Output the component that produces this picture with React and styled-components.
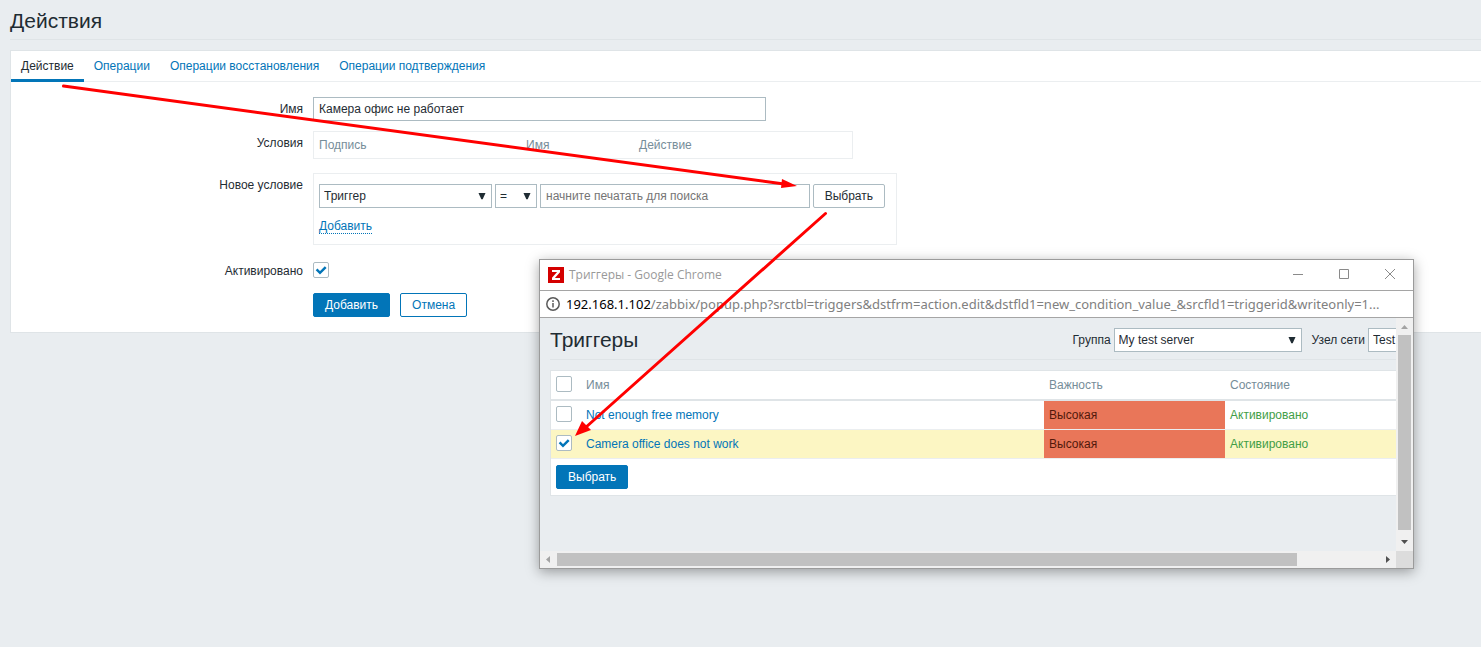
import React, { useState } from "react";
import styled, { createGlobalStyle } from "styled-components";

const COLORS = {
  page: "#e9edf0",
  text: "#1f2c33",
  link: "#0275b8",
  grey: "#768d99",
  line: "#dfe4e7",
  lightLine: "#ebeef0",
  control: "#acbbc2",
  high: "#e97659",
  highText: "#52190b",
  green: "#429e47",
  selected: "#fcf6c3",
  arrow: "#ff0000",
};

const TABS = [
  "Действие",
  "Операции",
  "Операции восстановления",
  "Операции подтверждения",
];

const TRIGGERS = [
  { id: 1, name: "Not enough free memory" },
  { id: 2, name: "Camera office does not work" },
];

const Select = ({ label, id, width, options }) => (
  <StSelectWrap $width={width}>
    <StSelect id={id} aria-label={label}>
      {options.map((option) => (
        <option key={option}>{option}</option>
      ))}
    </StSelect>
    <StCaret viewBox="0 0 8 8" aria-hidden="true">
      <path d="M0.500 1h7L4.700 7.200h-1.400z" fill={COLORS.text} />
    </StCaret>
  </StSelectWrap>
);

const CheckBox = ({ id, label, checked, onChange }) => (
  <StCheck>
    <input
      id={id}
      type="checkbox"
      aria-label={label}
      checked={checked}
      onChange={onChange}
    />
    {checked && (
      <svg viewBox="0 0 16 16" aria-hidden="true">
        <path
          d="M3.600 7.400l3.400 3.400 5.700-5.600"
          fill="none"
          stroke={COLORS.link}
          strokeWidth="2.500"
        />
      </svg>
    )}
  </StCheck>
);

const ActionForm = () => {
  const [name, setName] = useState("Камера офис не работает");
  const [enabled, setEnabled] = useState(true);

  return (
    <StForm onSubmit={(e) => e.preventDefault()}>
      <StLabel htmlFor="name">Имя</StLabel>
      <StNameInput
        id="name"
        value={name}
        onChange={(e) => setName(e.target.value)}
      />

      <StLabel as="span">Условия</StLabel>
      <StConditions>
        <thead>
          <tr>
            <th>Подпись</th>
            <th>Имя</th>
            <th>Действие</th>
          </tr>
        </thead>
      </StConditions>

      <StLabel htmlFor="condition">Новое условие</StLabel>
      <StNewCondition>
        <StControls>
          <Select id="condition" width="173px" options={["Триггер"]} />
          <Select label="Оператор" width="42px" options={["="]} />
          <StSearch
            aria-label="Триггер"
            placeholder="начните печатать для поиска"
          />
          <StButton $kind="grey">Выбрать</StButton>
        </StControls>
        <StAddLink type="button">Добавить</StAddLink>
      </StNewCondition>

      <StLabel htmlFor="enabled">Активировано</StLabel>
      <StEnabled>
        <CheckBox
          id="enabled"
          checked={enabled}
          onChange={() => setEnabled(!enabled)}
        />
      </StEnabled>

      <StFormButtons>
        <StButton $kind="solid">Добавить</StButton>
        <StButton $kind="outline">Отмена</StButton>
      </StFormButtons>
    </StForm>
  );
};

const TriggerTable = () => {
  const [picked, setPicked] = useState([2]);
  const toggle = (id) =>
    setPicked(
      picked.includes(id) ? picked.filter((p) => p !== id) : [...picked, id]
    );
  const all = picked.length === TRIGGERS.length;

  return (
    <StTableBox>
      <StTable>
        <colgroup>
          <col width="30" />
          <col width="463" />
          <col width="181" />
          <col />
        </colgroup>
        <thead>
          <tr>
            <th>
              <CheckBox
                label="Выбрать все"
                checked={all}
                onChange={() => setPicked(all ? [] : TRIGGERS.map((t) => t.id))}
              />
            </th>
            <th>Имя</th>
            <th>Важность</th>
            <th>Состояние</th>
          </tr>
        </thead>
        <tbody>
          {TRIGGERS.map((trigger) => (
            <StRow key={trigger.id} $selected={picked.includes(trigger.id)}>
              <td>
                <CheckBox
                  label={trigger.name}
                  checked={picked.includes(trigger.id)}
                  onChange={() => toggle(trigger.id)}
                />
              </td>
              <td>
                <StLink href="#">{trigger.name}</StLink>
              </td>
              <StSeverity>Высокая</StSeverity>
              <StStatus>Активировано</StStatus>
            </StRow>
          ))}
        </tbody>
      </StTable>
      <StTableFooter>
        <StButton $kind="solid">Выбрать</StButton>
      </StTableFooter>
    </StTableBox>
  );
};

const PopupWindow = () => (
  <StWindow>
    <StTitleBar>
      <StLogo viewBox="0 0 16 16" aria-hidden="true">
        <rect width="16" height="16" fill="#d40000" />
        <path d="M4 3h8v2.2L6.9 11H12v2H4v-2.2L9.1 5H4z" fill="#fff" />
      </StLogo>
      <StWindowTitle>Триггеры - Google Chrome</StWindowTitle>
      <StWindowButton aria-label="Свернуть">
        <svg viewBox="0 0 10 10">
          <path d="M0 5.5h10" />
        </svg>
      </StWindowButton>
      <StWindowButton aria-label="Развернуть">
        <svg viewBox="0 0 10 10">
          <path d="M0.5 0.5h9v9h-9z" />
        </svg>
      </StWindowButton>
      <StWindowButton aria-label="Закрыть">
        <svg viewBox="0 0 10 10">
          <path d="M0 0l10 10M10 0L0 10" />
        </svg>
      </StWindowButton>
    </StTitleBar>
    <StAddressBar>
      <StInfo viewBox="0 0 14 14" aria-hidden="true">
        <circle cx="7" cy="7" r="6.2" />
        <path d="M7 6v4.5M7 3.3v1.6" />
      </StInfo>
      <StUrl>
        <b>192.168.1.102</b>
        /zabbix/popup.php?srctbl=triggers&amp;dstfrm=action.edit&amp;dstfld1=new_condition_value_&amp;srcfld1=triggerid&amp;writeonly=1...
      </StUrl>
    </StAddressBar>
    <StViewport>
      <StPopupPage>
        <StPopupHeader>
          <StTitle as="h2">Триггеры</StTitle>
          <StFilter>
            <label htmlFor="group">Группа</label>
            <Select id="group" width="188px" options={["My test server"]} />
          </StFilter>
          <StFilter>
            <label htmlFor="host">Узел сети</label>
            <Select id="host" width="112px" options={["Test"]} />
          </StFilter>
        </StPopupHeader>
        <TriggerTable />
      </StPopupPage>
      <StScrollY>
        <StScrollArrow viewBox="0 0 17 17">
          <path d="M5 11l3.5-4 3.5 4z" fill="#a3a3a3" />
        </StScrollArrow>
        <StThumbY />
        <StScrollArrow viewBox="0 0 17 17">
          <path d="M5 6l3.5 4L12 6z" fill="#505050" />
        </StScrollArrow>
      </StScrollY>
      <StScrollX>
        <StScrollArrow viewBox="0 0 17 17">
          <path d="M10 5L6 8.500l4 3.500z" fill="#a3a3a3" />
        </StScrollArrow>
        <StTrackX>
          <StThumbX />
        </StTrackX>
        <StScrollArrow viewBox="0 0 17 17">
          <path d="M7 5l4 3.500L7 12z" fill="#505050" />
        </StScrollArrow>
      </StScrollX>
      <StCorner />
    </StViewport>
  </StWindow>
);

const App = () => {
  const [tab, setTab] = useState(TABS[0]);

  return (
    <StPage>
      <GlobalStyle />
      <StHeader>
        <StTitle>Действия</StTitle>
      </StHeader>
      <StPanel>
        <StTabs>
          {TABS.map((title) => (
            <StTab
              key={title}
              $active={title === tab}
              onClick={() => setTab(title)}
            >
              {title}
            </StTab>
          ))}
        </StTabs>
        <ActionForm />
      </StPanel>
      <PopupWindow />
      <StArrows viewBox="0 0 840 450" aria-hidden="true">
        <path d="M63.500 86L784 184M825.500 213.500L585 428" />
        <polygon points="782,179 797,186 781,188" />
        <polygon points="575,436 582,421 591,430" />
      </StArrows>
    </StPage>
  );
};

export default App;

const GlobalStyle = createGlobalStyle`
  * {
    box-sizing: border-box;
  }
  body {
    margin: 0;
    background: ${COLORS.page};
    color: ${COLORS.text};
    font-family: "Liberation Sans", Arial, sans-serif;
    font-size: 12px;
    line-height: 14px;
  }
  button, input, select {
    font: inherit;
    color: inherit;
  }
`;

const StPage = styled.div`
  position: relative;
  min-height: 100vh;
  padding-left: 10px;
  overflow: hidden;
`;

const StHeader = styled.header`
  padding: 9px 0 6px;
  margin-bottom: 10px;
  border-bottom: 1px solid ${COLORS.line};
`;

const StTitle = styled.h1`
  margin: 0;
  font-size: 21px;
  line-height: 24px;
  font-weight: normal;
`;

const StPanel = styled.main`
  background: #ffffff;
  border: 1px solid ${COLORS.line};
  border-right: 0;
`;

const StTabs = styled.nav`
  display: flex;
  border-bottom: 1px solid ${COLORS.lightLine};
`;

const StTab = styled.button`
  height: 31px;
  margin-bottom: -1px;
  padding: 2px 10px 0;
  border: 0;
  border-bottom: 3px solid
    ${(props) => (props.$active ? COLORS.link : "transparent")};
  background: none;
  color: ${(props) => (props.$active ? COLORS.text : COLORS.link)};
`;

const StForm = styled.form`
  display: grid;
  grid-template-columns: 20% 1fr;
  column-gap: 10px;
  justify-items: start;
  padding: 15px 10px 15px 0;
`;

const StLabel = styled.label`
  justify-self: end;
  padding-top: 5px;
`;

const StNameInput = styled.input`
  width: 453px;
  height: 24px;
  margin-bottom: 10px;
  padding: 0 5px;
  border: 1px solid ${COLORS.control};
`;

const StConditions = styled.table`
  width: 540px;
  height: 28px;
  margin-bottom: 14px;
  border: 1px solid ${COLORS.lightLine};
  border-spacing: 0;
  table-layout: fixed;
  color: ${COLORS.grey};

  th {
    padding: 0 5px;
    font-weight: normal;
    text-align: left;
  }
  th:nth-child(1) {
    width: 207px;
  }
  th:nth-child(2) {
    width: 113px;
  }
`;

const StNewCondition = styled.div`
  width: 584px;
  margin-bottom: 14px;
  padding: 10px 11px 10px 5px;
  border: 1px solid ${COLORS.lightLine};
`;

const StControls = styled.div`
  display: flex;
  gap: 3px;
  margin-bottom: 11px;
`;

const StSearch = styled.input`
  flex: 1;
  min-width: 0;
  height: 24px;
  padding: 0 5px;
  border: 1px solid ${COLORS.control};

  &::placeholder {
    color: #757575;
  }
`;

const StButton = styled.button`
  height: 24px;
  padding: 0 11px;
  border: 1px solid
    ${(props) => (props.$kind === "grey" ? COLORS.control : COLORS.link)};
  border-radius: 2px;
  background: ${(props) => (props.$kind === "solid" ? COLORS.link : "#ffffff")};
  color: ${(props) =>
    props.$kind === "solid"
      ? "#ffffff"
      : props.$kind === "grey"
      ? COLORS.text
      : COLORS.link};
`;

const StAddLink = styled.button`
  display: block;
  padding: 0;
  border: 0;
  border-bottom: 1px dotted ${COLORS.link};
  background: none;
  color: ${COLORS.link};
`;

const StEnabled = styled.div`
  padding: 3px 0 15px;
`;

const StFormButtons = styled.div`
  grid-column: 2;
  display: flex;
  gap: 10px;
`;

const StSelectWrap = styled.span`
  position: relative;
  display: inline-block;
  width: ${(props) => props.$width};
`;

const StSelect = styled.select`
  display: block;
  appearance: none;
  width: 100%;
  height: 24px;
  padding: 0 4px;
  border: 1px solid ${COLORS.control};
  border-radius: 0;
  background: #ffffff;
`;

const StCaret = styled.svg`
  position: absolute;
  top: 8px;
  right: 6px;
  width: 8px;
  height: 8px;
  pointer-events: none;
`;

const StCheck = styled.span`
  position: relative;
  display: block;
  width: 16px;
  height: 16px;

  input {
    appearance: none;
    display: block;
    width: 16px;
    height: 16px;
    margin: 0;
    border: 1px solid ${COLORS.control};
    border-radius: 2px;
    background: #ffffff;
  }
  svg {
    position: absolute;
    inset: 0;
    pointer-events: none;
  }
`;

const StWindow = styled.section`
  position: absolute;
  top: 259px;
  left: 539px;
  display: flex;
  flex-direction: column;
  width: 875px;
  height: 310px;
  border: 1px solid #9b9b9b;
  background: #ffffff;
  box-shadow: 0 3px 12px rgba(0, 0, 0, 0.35);
`;

const StTitleBar = styled.div`
  display: flex;
  align-items: center;
  height: 31px;
  padding-left: 8px;
  border-bottom: 1px solid #a5a5a5;
`;

const StLogo = styled.svg`
  width: 16px;
  height: 16px;
  margin-right: 5px;
`;

const StWindowTitle = styled.span`
  flex: 1;
  color: #999999;
  font-family: "Open Sans", "Noto Sans", sans-serif;
  font-size: 12px;
`;

const StWindowButton = styled.button`
  width: 46px;
  height: 30px;
  padding: 0;
  border: 0;
  background: none;

  svg {
    width: 10px;
    height: 10px;
    fill: none;
    stroke: #8a8a8a;
    overflow: visible;
  }
`;

const StAddressBar = styled.div`
  display: flex;
  align-items: center;
  gap: 6px;
  height: 27px;
  padding: 0 6px;
  border-bottom: 1px solid #a5a5a5;
`;

const StInfo = styled.svg`
  flex: none;
  width: 14px;
  height: 14px;
  fill: none;
  stroke: #5a5a5a;
  stroke-width: 1.5;
`;

const StUrl = styled.span`
  white-space: nowrap;
  color: #808080;
  font-family: "Noto Sans", "Open Sans", sans-serif;
  font-size: 13px;
  line-height: 20px;

  b {
    color: #000000;
    font-weight: normal;
  }
`;

const StViewport = styled.div`
  flex: 1;
  min-height: 0;
  display: grid;
  grid-template: minmax(0, 1fr) 17px / minmax(0, 1fr) 17px;
`;

const StPopupPage = styled.div`
  overflow: hidden;
  padding-left: 10px;
  background: ${COLORS.page};
`;

const StPopupHeader = styled.div`
  display: flex;
  align-items: center;
  gap: 10px;
  width: 930px;
  height: 42px;
  margin-bottom: 10px;
  padding: 9px 0 6px;
  border-bottom: 1px solid ${COLORS.line};

  h2 {
    flex: 1;
  }
`;

const StFilter = styled.div`
  display: flex;
  align-items: center;
  gap: 3px;
`;

const StTableBox = styled.div`
  width: 930px;
  border: 1px solid ${COLORS.line};
  background: #ffffff;
`;

const StTable = styled.table`
  width: 100%;
  border-spacing: 0;
  table-layout: fixed;

  th {
    height: 30px;
    padding: 0 5px;
    border-bottom: 2px solid ${COLORS.line};
    color: ${COLORS.grey};
    font-weight: normal;
    text-align: left;
  }
  td {
    height: 29px;
    padding: 0 5px;
    border-bottom: 1px solid ${COLORS.lightLine};
  }
  th:first-child,
  td:first-child {
    padding-bottom: 2px;
  }
`;

const StRow = styled.tr`
  background: ${(props) => (props.$selected ? COLORS.selected : "#ffffff")};
`;

const StLink = styled.a`
  color: ${COLORS.link};
  text-decoration: none;
`;

const StSeverity = styled.td`
  background: ${COLORS.high};
  background-clip: padding-box;
  color: ${COLORS.highText};
`;

const StStatus = styled.td`
  color: ${COLORS.green};
`;

const StTableFooter = styled.div`
  padding: 6px 5px;
`;

const StScrollY = styled.div`
  display: flex;
  flex-direction: column;
  align-items: center;
  background: #f0f0f0;
`;

const StThumbY = styled.div`
  flex: 1;
  width: 13px;
  margin-bottom: 4px;
  background: #c1c1c1;
`;

const StScrollX = styled.div`
  display: flex;
  align-items: center;
  background: #f0f0f0;
`;

const StTrackX = styled.div`
  flex: 1;
`;

const StThumbX = styled.div`
  width: 90%;
  height: 13px;
  background: #c1c1c1;
`;

const StScrollArrow = styled.svg`
  flex: none;
  width: 17px;
  height: 17px;
`;

const StCorner = styled.div`
  background: #dcdcdc;
`;

const StArrows = styled.svg`
  position: absolute;
  top: 0;
  left: 0;
  width: 840px;
  height: 450px;
  pointer-events: none;
  fill: ${COLORS.arrow};

  path {
    stroke: ${COLORS.arrow};
    stroke-width: 3;
    stroke-linecap: round;
  }
`;
